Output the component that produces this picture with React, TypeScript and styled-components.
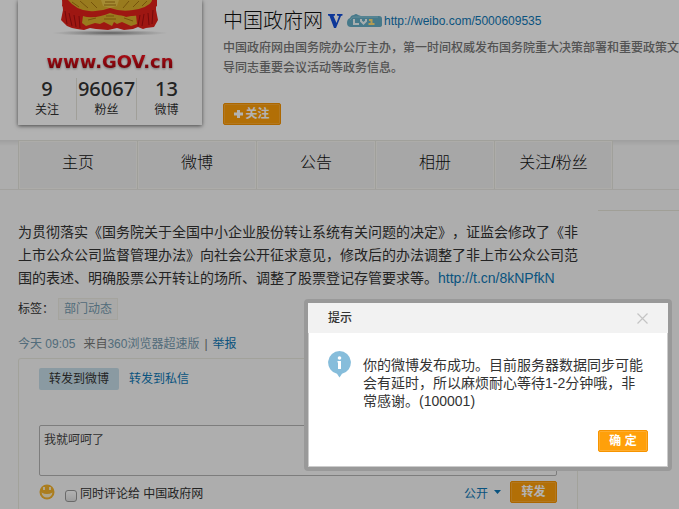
import React, { useState } from "react";
import styled, { createGlobalStyle } from "styled-components";

const sans = `"Liberation Sans", "Noto Sans CJK SC", sans-serif`;

const GlobalStyle = createGlobalStyle`
  * { box-sizing: border-box; }
  html, body, #root { height: 100%; }
  body {
    margin: 0;
    background: #f8f8f8;
    color: #333;
    font: 12px/18px ${sans};
    text-spacing-trim: space-all;
  }
  a { color: #0f78b6; text-decoration: none; }
  button, input, textarea { font-family: inherit; }
  p, h1, h2, dl, dt, dd { margin: 0; }
`;

const Page = styled.div`
  min-height: 100%;
`;

const Profile = styled.header`
  display: flex;
  align-items: flex-start;
  gap: 21px;
  height: 140px;
  padding-left: 18px;
  background: #fff;
`;

const AvatarCard = styled.section`
  flex: none;
  width: 184px;
  padding-bottom: 5px;
  display: flex;
  flex-direction: column;
  background: #fff;
  box-shadow: 0 1px 4px rgba(0, 0, 0, 0.6);
`;

const Emblem = styled.svg`
  display: block;
  width: 184px;
  height: 40px;
`;

const SiteName = styled.div`
  height: 38px;
  padding-top: 11px;
  font: bold 18px/22px "DejaVu Sans", sans-serif;
  text-align: center;
  color: transparent;
  background: linear-gradient(#e8101c 45%, #8c0008 85%) text;
  filter: drop-shadow(0 1px 1px rgba(0, 0, 0, 0.35));
`;

const Stats = styled.dl`
  display: grid;
  grid-template-columns: 58px 60px 60px;
  height: 42px;
`;

const Stat = styled.div`
  display: flex;
  flex-direction: column-reverse;
  justify-content: flex-end;
  align-items: center;
  & + & { border-left: 1px solid #e6e4dc; }
  dd { font: 500 20px/22px "Noto Sans", "Open Sans", sans-serif; }
  dt { font-size: 12px; line-height: 20px; }
`;

const Intro = styled.section`
  flex: 1;
  min-width: 0;
  overflow: hidden;
  padding-top: 8px;
`;

const TitleRow = styled.div`
  display: flex;
  align-items: center;
  height: 26px;
  font-size: 12px;
  svg { margin-left: 4px; }
  a { margin-left: 2px; }
`;

const Title = styled.h1`
  font: 300 20px/24px ${sans};
  color: #111;
  white-space: nowrap;
`;

const Description = styled.p`
  margin: 4px 0 25px;
  line-height: 20px;
  font-weight: 500;
  color: #777;
  white-space: nowrap;
`;

const OrangeButton = styled.button<{ $width: number }>`
  display: inline-flex;
  align-items: center;
  justify-content: center;
  gap: 2px;
  width: ${(p) => p.$width}px;
  height: 22px;
  padding: 0;
  border: 1px solid #f79400;
  border-radius: 2px;
  background: #ffa00a;
  box-shadow: inset 0 0 0 1px #ffad2e;
  color: #fff;
  font-size: 12px;
  font-weight: bold;
  line-height: 20px;
  cursor: pointer;
`;

const Nav = styled.nav`
  display: flex;
  height: 50px;
  padding-left: 18px;
  border-bottom: 1px solid #e8e7e2;
  background: linear-gradient(#e4e4e4, #f8f8f8 6px);
`;

const NavTab = styled.a`
  width: 119px;
  border: 1px solid #e6e5df;
  border-right-width: 0;
  border-bottom-width: 0;
  box-shadow: inset 0 0 0 1px #f8f7f3;
  background: #efefef;
  color: #111;
  font-size: 16px;
  font-weight: 300;
  line-height: 44px;
  text-align: center;
  &:last-child { border-right-width: 1px; }
`;

const Columns = styled.div`
  display: grid;
  grid-template-columns: 560px 1fr;
  gap: 20px;
  padding-left: 18px;
`;

const Post = styled.main`
  padding-top: 31px;
`;

const Sidebar = styled.aside`
  margin-top: 20px;
  border-top: 1px solid #e6e4d8;
`;

const PostText = styled.p`
  font-size: 14px;
  line-height: 23px;
`;

const Tags = styled.div`
  display: flex;
  align-items: center;
  gap: 4px;
  margin-top: 8px;
`;

const Tag = styled.a`
  height: 22px;
  padding: 0 5px;
  border: 1px solid #ecebe3;
  background: #f3f3f1;
  color: #769bb0;
  line-height: 20px;
`;

const Meta = styled.div`
  display: flex;
  margin-top: 15px;
  color: #777;
`;

const MetaLink = styled.a`
  color: #769bb0;
`;

const Source = styled.span`
  margin-left: 8px;
  &::after { content: "|"; margin: 0 5px; }
`;

const Forward = styled.form`
  margin-top: 5px;
  padding: 9px 20px 6px;
  border: 1px solid #e9e8df;
  border-bottom: 0;
  border-radius: 3px 3px 0 0;
`;

const ForwardTabs = styled.div`
  display: flex;
`;

const ForwardTab = styled.button<{ $active?: boolean }>`
  height: 22px;
  padding: 0 10px;
  border: 0;
  border-radius: 2px;
  background: ${(p) => (p.$active ? "#c6dde8" : "transparent")};
  color: ${(p) => (p.$active ? "#333" : "#0f78b6")};
  font-size: 12px;
  line-height: 22px;
`;

const Message = styled.textarea`
  display: block;
  width: 100%;
  height: 51px;
  margin-top: 35px;
  padding: 5px 4px;
  border: 1px solid #b4b4b4;
  border-radius: 2px;
  background: #fafafa;
  color: #444;
  font-size: 12px;
  line-height: 18px;
  resize: none;
  outline: 0;
`;

const Actions = styled.div`
  display: flex;
  align-items: center;
  height: 22px;
  margin-top: 5px;
`;

const Smile = styled.button`
  display: flex;
  padding: 0;
  margin-right: 10px;
  border: 0;
  background: none;
`;

const CheckLabel = styled.label`
  display: flex;
  align-items: center;
  gap: 3px;
  flex: 1;
  padding-top: 3px;
`;

const Check = styled.input`
  appearance: none;
  width: 12px;
  height: 12px;
  margin: 4px 0 0;
  border: 1px solid #999;
  border-radius: 3px;
  background: linear-gradient(#fff, #e2e2e2);
  &:checked { background: #0f78b6; }
`;

const Visibility = styled.button`
  display: flex;
  align-items: center;
  gap: 6px;
  margin-right: 9px;
  padding: 0;
  border: 0;
  background: none;
  color: #0f78b6;
  font-size: 12px;
`;

const Backdrop = styled.div`
  position: fixed;
  inset: 0;
  display: flex;
  align-items: flex-end;
  justify-content: flex-end;
  padding: 0 7px 38px;
  background: rgba(0, 0, 0, 0.3);
`;

const Dialog = styled.section`
  width: 368px;
  border: 4px solid #999;
  border-radius: 4px;
  background: #fff;
  box-shadow: inset 0 0 0 1px #ccc;
`;

const DialogHeader = styled.header`
  display: flex;
  align-items: center;
  justify-content: space-between;
  height: 30px;
  padding: 0 20px;
  background: #f2f2f2;
  h2 { font-size: 12px; font-weight: 500; }
`;

const Close = styled.button`
  display: flex;
  padding: 0;
  border: 0;
  background: none;
`;

const DialogBody = styled.div`
  display: flex;
  gap: 12px;
  padding: 18px 20px 0;
  p { flex: 1; margin-top: 5px; font-size: 14px; line-height: 18px; }
`;

const DialogFooter = styled.footer`
  display: flex;
  justify-content: flex-end;
  padding: 20px 20px 15px;
`;

export default function App() {
  const [open, setOpen] = useState(true);
  return (
    <>
      <GlobalStyle />
      <Page>
        <Profile>
          <AvatarCard>
            <Emblem viewBox="18 0 184 40" role="img" aria-label="国徽">
              <defs>
                <radialGradient id="shade">
                  <stop offset="0" stopColor="#777" stopOpacity=".9" />
                  <stop offset="1" stopColor="#999" stopOpacity="0" />
                </radialGradient>
              </defs>
              <ellipse cx="110" cy="33" rx="58" ry="3" fill="url(#shade)" />
              <path d="M62 0H156L156 10 158 20 154 27 146 28 143 29 138 27 133 29 124 30 117 28 108 30 96 29 90 28 84 30 77 29 72 28 67 26 61 20 63 10Z" fill="#e3211a" />
              <path d="M67 0H152L151 6 146 9 136 12 125 14 94 15 82 13 69 7Z" fill="#dcb02c" />
              <path d="M83 16L95 17 104 13H117L126 17 136 15 137 24 131 26 122 22 117 24 114 22 112 26 108 24 104 22 100 24 95 23 86 26 82 23Z" fill="#dcb02c" />
              <path d="M63 0L68 0Q76 10 89 11 100 12 110 8 121 12 133 10 148 8 153 0L157 0 157 6Q146 16 130 16 118 16 110 13 99 18 87 17 72 14 62 6Z" fill="#e3211a" />
              <path d="M101 0H119L117 6 110 8 103 6Z" fill="#ecc94a" />
              <path d="M105 2H115M104 5H116M106 16H114M104 19H116M72 2L79 7M80 1L88 8M91 2L97 8M123 8L129 1M133 7L139 1M142 6L147 1M88 20L96 18M124 18L133 21" stroke="#a97812" fill="none" />
              <path d="M65 11L67 24M69 13L72 26M74 15L76 27M79 16L80 28M140 15L138 26M144 14L142 26M148 13L149 25M153 10L152 24" stroke="#a80f10" fill="none" />
            </Emblem>
            <SiteName>www.GOV.cn</SiteName>
            <Stats>
              <Stat><dt>关注</dt><dd>9</dd></Stat>
              <Stat><dt>粉丝</dt><dd>96067</dd></Stat>
              <Stat><dt>微博</dt><dd>13</dd></Stat>
            </Stats>
          </AvatarCard>
          <Intro>
            <TitleRow>
              <Title>中国政府网</Title>
              <svg width="16" height="16" viewBox="0 0 16 16" role="img" aria-label="认证">
                <path d="M1 1H8V2.500L6.500 3 9.500 10 12 3 10 2.500V1H15.500V2.500L14 3 9 15H7L2.500 3 1 2.500Z" fill="#1450dc" />
              </svg>
              <svg width="35" height="16" viewBox="0 0 35 16" role="img" aria-label="LV 1">
                <path d="M4 14Q0 14 0 10 0 6 3 5 4 2 7 2 9 0 11 2L14 3H32Q35 3 35 6V12Q35 14 32 14Z" fill="#65aec6" />
                <path d="M3 7Q5 3 9 4H31" stroke="#8fcbdc" fill="none" />
                <path d="M7 6V11H12" stroke="#eef8fa" strokeWidth="2" fill="none" />
                <path d="M14 6V8L16.500 10.500 19 8V6" stroke="#eef8fa" strokeWidth="2" fill="none" />
                <path d="M22 7H24.500V11M21.500 11H27.500" stroke="#ffdf78" strokeWidth="2" fill="none" />
              </svg>
              <a href="http://weibo.com/5000609535">http://weibo.com/5000609535</a>
            </TitleRow>
            <Description>
              中国政府网由国务院办公厅主办，第一时间权威发布国务院重大决策部署和重要政策文
              <br />
              导同志重要会议活动等政务信息。
            </Description>
            <OrangeButton $width={58}>
              <svg width="9" height="10" viewBox="0 0 9 10" aria-hidden="true">
                <path d="M4.500 1V9M0 5H9" stroke="#fff" strokeWidth="3" />
              </svg>
              关注
            </OrangeButton>
          </Intro>
        </Profile>
        <Nav>
          {["主页", "微博", "公告", "相册", "关注/粉丝"].map((label) => (
            <NavTab key={label} href="#">{label}</NavTab>
          ))}
        </Nav>
        <Columns>
          <Post>
            <PostText>
              为贯彻落实《国务院关于全国中小企业股份转让系统有关问题的决定》，证监会修改了《非上市公众公司监督管理办法》向社会公开征求意见，修改后的办法调整了非上市公众公司范围的表述、明确股票公开转让的场所、调整了股票登记存管要求等。
              <a href="http://t.cn/8kNPfkN">http://t.cn/8kNPfkN</a>
            </PostText>
            <Tags>标签：<Tag href="#">部门动态</Tag></Tags>
            <Meta>
              <MetaLink href="#">今天 09:05</MetaLink>
              <Source>来自<MetaLink href="#">360浏览器超速版</MetaLink></Source>
              <a href="#">举报</a>
            </Meta>
            <Forward onSubmit={(e) => e.preventDefault()}>
              <ForwardTabs>
                <ForwardTab type="button" $active>转发到微博</ForwardTab>
                <ForwardTab type="button">转发到私信</ForwardTab>
              </ForwardTabs>
              <Message aria-label="转发内容" defaultValue="我就呵呵了" />
              <Actions>
                <Smile type="button" aria-label="表情">
                  <svg width="16" height="16" viewBox="0 0 16 16">
                    <circle cx="8" cy="8" r="7.500" fill="#f5b32c" />
                    <path d="M2.500 8.500Q8 11.500 13.500 8.500 12.500 13.500 8 13.500T2.500 8.500Z" fill="#fbeecb" />
                    <rect x="4" y="3" width="2" height="3" fill="#fbeecb" />
                    <rect x="10" y="3" width="2" height="3" fill="#fbeecb" />
                  </svg>
                </Smile>
                <CheckLabel>
                  <Check type="checkbox" />
                  同时评论给 中国政府网
                </CheckLabel>
                <Visibility type="button">
                  公开
                  <svg width="7" height="4" viewBox="0 0 7 4" aria-hidden="true">
                    <path d="M0 0H7L3.500 4Z" fill="#0f78b6" />
                  </svg>
                </Visibility>
                <OrangeButton $width={47} type="submit">转发</OrangeButton>
              </Actions>
            </Forward>
          </Post>
          <Sidebar />
        </Columns>
      </Page>
      {open && (
        <Backdrop>
          <Dialog role="dialog" aria-modal="true" aria-labelledby="dialog-title">
            <DialogHeader>
              <h2 id="dialog-title">提示</h2>
              <Close aria-label="关闭" onClick={() => setOpen(false)}>
                <svg width="11" height="11" viewBox="0 0 11 11">
                  <path d="M.500 .500L10.500 10.500M10.500 .500L.500 10.500" stroke="#c4c4c4" strokeWidth="1.200" />
                </svg>
              </Close>
            </DialogHeader>
            <DialogBody>
              <svg width="23" height="27" viewBox="0 0 23 27" aria-hidden="true">
                <path d="M11.500 0A11.500 11.500 0 0 1 14 22.700L11.500 26.500 9 22.700A11.500 11.500 0 0 1 11.500 0Z" fill="#86bddb" />
                <circle cx="11.500" cy="7" r="1.800" fill="#fff" />
                <path d="M9.500 10H13V18H10V11.500H9.500Z" fill="#fff" />
              </svg>
              <p>你的微博发布成功。目前服务器数据同步可能会有延时，所以麻烦耐心等待1-2分钟哦，非常感谢。(100001)</p>
            </DialogBody>
            <DialogFooter>
              <OrangeButton $width={50} onClick={() => setOpen(false)}>确 定</OrangeButton>
            </DialogFooter>
          </Dialog>
        </Backdrop>
      )}
    </>
  );
}
